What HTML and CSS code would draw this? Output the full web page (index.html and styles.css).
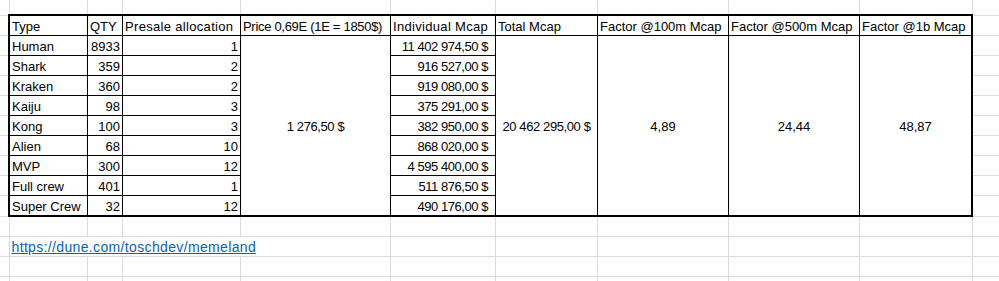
FILE: index.html
```html
<!DOCTYPE html>
<html lang="en">
<head>
<meta charset="utf-8">
<title>Memeland presale</title>
<link rel="stylesheet" href="styles.css">
</head>
<body>
<table class="sheet">
  <colgroup>
    <col class="c-gutter">
    <col class="c-type">
    <col class="c-qty">
    <col class="c-alloc">
    <col class="c-price">
    <col class="c-indiv">
    <col class="c-total">
    <col class="c-f100">
    <col class="c-f500">
    <col class="c-f1b">
    <col class="c-extra">
  </colgroup>
  <tbody>
    <tr class="r-first">
      <td class="g gut"></td><td class="g"></td><td class="g"></td><td class="g"></td><td class="g"></td><td class="g"></td><td class="g"></td><td class="g"></td><td class="g"></td><td class="g"></td><td class="g"></td>
    </tr>
    <tr class="r-head">
      <td class="g gut"></td>
      <td class="t top left">Type</td>
      <td class="t top">QTY</td>
      <td class="t top wide">Presale allocation</td>
      <td class="t top tight">Price 0,69E (1E = 1850$)</td>
      <td class="t top wide">Individual Mcap</td>
      <td class="t top">Total Mcap</td>
      <td class="t top">Factor @100m Mcap</td>
      <td class="t top">Factor @500m Mcap</td>
      <td class="t top right">Factor @1b Mcap</td>
      <td class="g"></td>
    </tr>
    <tr class="r-data">
      <td class="g gut"></td>
      <td class="t left">Human</td>
      <td class="t num">8933</td>
      <td class="t num">1</td>
      <td class="t mid bottom amount" rowspan="9">1 276,50 $</td>
      <td class="t num money">11 402 974,50 $</td>
      <td class="t mid bottom amount" rowspan="9">20 462 295,00 $</td>
      <td class="t mid bottom" rowspan="9">4,89</td>
      <td class="t mid bottom" rowspan="9">24,44</td>
      <td class="t mid bottom right" rowspan="9">48,87</td>
      <td class="g"></td>
    </tr>
    <tr class="r-data">
      <td class="g gut"></td>
      <td class="t left">Shark</td>
      <td class="t num">359</td>
      <td class="t num">2</td>
      <td class="t num money">916 527,00 $</td>
      <td class="g"></td>
    </tr>
    <tr class="r-data">
      <td class="g gut"></td>
      <td class="t left">Kraken</td>
      <td class="t num">360</td>
      <td class="t num">2</td>
      <td class="t num money">919 080,00 $</td>
      <td class="g"></td>
    </tr>
    <tr class="r-data">
      <td class="g gut"></td>
      <td class="t left">Kaiju</td>
      <td class="t num">98</td>
      <td class="t num">3</td>
      <td class="t num money">375 291,00 $</td>
      <td class="g"></td>
    </tr>
    <tr class="r-data">
      <td class="g gut"></td>
      <td class="t left">Kong</td>
      <td class="t num">100</td>
      <td class="t num">3</td>
      <td class="t num money">382 950,00 $</td>
      <td class="g"></td>
    </tr>
    <tr class="r-data">
      <td class="g gut"></td>
      <td class="t left">Alien</td>
      <td class="t num">68</td>
      <td class="t num">10</td>
      <td class="t num money">868 020,00 $</td>
      <td class="g"></td>
    </tr>
    <tr class="r-data">
      <td class="g gut"></td>
      <td class="t left">MVP</td>
      <td class="t num">300</td>
      <td class="t num">12</td>
      <td class="t num money">4 595 400,00 $</td>
      <td class="g"></td>
    </tr>
    <tr class="r-data">
      <td class="g gut"></td>
      <td class="t left">Full crew</td>
      <td class="t num">401</td>
      <td class="t num">1</td>
      <td class="t num money">511 876,50 $</td>
      <td class="g"></td>
    </tr>
    <tr class="r-last">
      <td class="g gut"></td>
      <td class="t left bottom">Super Crew</td>
      <td class="t num bottom">32</td>
      <td class="t num bottom">12</td>
      <td class="t num money bottom">490 176,00 $</td>
      <td class="g"></td>
    </tr>
    <tr class="r-after">
      <td class="g gut"></td><td class="g"></td><td class="g"></td><td class="g"></td><td class="g"></td><td class="g"></td><td class="g"></td><td class="g"></td><td class="g"></td><td class="g"></td><td class="g"></td>
    </tr>
    <tr class="r-row">
      <td class="g gut"></td>
      <td class="g link-cell" colspan="4"><a class="link" href="#">https://dune.com/toschdev/memeland</a></td>
      <td class="g"></td><td class="g"></td><td class="g"></td><td class="g"></td><td class="g"></td><td class="g"></td>
    </tr>
    <tr class="r-row">
      <td class="g gut"></td><td class="g"></td><td class="g"></td><td class="g"></td><td class="g"></td><td class="g"></td><td class="g"></td><td class="g"></td><td class="g"></td><td class="g"></td><td class="g"></td>
    </tr>
    <tr class="r-row">
      <td class="g gut"></td><td class="g"></td><td class="g"></td><td class="g"></td><td class="g"></td><td class="g"></td><td class="g"></td><td class="g"></td><td class="g"></td><td class="g"></td><td class="g"></td>
    </tr>
  </tbody>
</table>
</body>
</html>
```
FILE: styles.css
```css
html, body {
  margin: 0;
  padding: 0;
  background: #ffffff;
  overflow: hidden;
}

.sheet {
  border-collapse: collapse;
  table-layout: fixed;
  width: 1012px;
  font-family: "Liberation Sans", Arial, sans-serif;
  font-size: 13px;
  line-height: 15px;
  color: #000000;
}

.c-gutter { width: 9px; }
.c-type { width: 78.5px; }
.c-qty { width: 35px; }
.c-alloc { width: 118px; }
.c-price { width: 150px; }
.c-indiv { width: 105px; }
.c-total { width: 102px; }
.c-f100 { width: 131px; }
.c-f500 { width: 131px; }
.c-f1b { width: 112.5px; }
.c-extra { width: 40px; }

.r-first { height: 15px; }
.r-head { height: 20.5px; }
.r-data { height: 20px; }
.r-last { height: 20.5px; }
.r-after { height: 20.5px; }
.r-row { height: 20px; }

td {
  padding: 0 2px 1px 2px;
  vertical-align: bottom;
  white-space: nowrap;
  text-align: left;
}

.g {
  border-top: 0;
  border-left: 0;
  border-right: 1px solid #dadcdd;
  border-bottom: 1px solid #dadcdd;
}

.t {
  border: 1px solid #000000;
}

.t.top { border-top-width: 2px; }
.t.left { border-left-width: 2px; }
.t.right { border-right-width: 2px; }
.t.bottom { border-bottom-width: 2px; }

.wide { letter-spacing: 0.32px; }
.tight { letter-spacing: -0.3px; }

.num { text-align: right; }
.money {
  padding-right: 7px;
  letter-spacing: -0.45px;
}

.mid {
  text-align: center;
  vertical-align: middle;
  padding-top: 2px;
}

.amount { letter-spacing: -0.4px; }

.link-cell {
  overflow: visible;
}

.link {
  color: #0563c1;
  text-decoration: underline;
  font-size: 14px;
  letter-spacing: 0.35px;
}
```
